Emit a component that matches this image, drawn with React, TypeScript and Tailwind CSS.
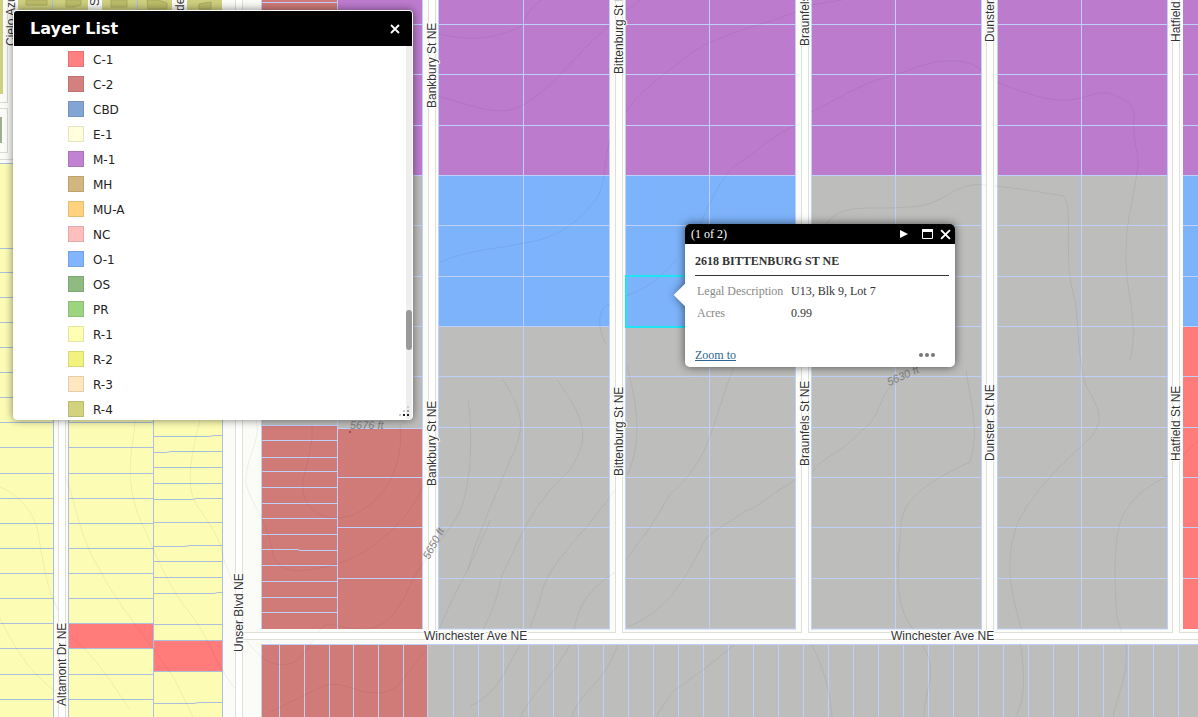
import React from 'react';

interface Layer {
  name: string;
  color: string;
}

const LAYERS: Layer[] = [
  { name: 'C-1', color: '#ff8080' },
  { name: 'C-2', color: '#d47f80' },
  { name: 'CBD', color: '#82a5d4' },
  { name: 'E-1', color: '#ffffdc' },
  { name: 'M-1', color: '#c182d4' },
  { name: 'MH', color: '#d2b57f' },
  { name: 'MU-A', color: '#ffd27f' },
  { name: 'NC', color: '#ffbebe' },
  { name: 'O-1', color: '#82b4ff' },
  { name: 'OS', color: '#8fbb82' },
  { name: 'PR', color: '#9cd480' },
  { name: 'R-1', color: '#ffffb4' },
  { name: 'R-2', color: '#f2f280' },
  { name: 'R-3', color: '#ffe6be' },
  { name: 'R-4', color: '#d3d37f' },
];

const PURPLE = '#bd7bce';
const BLUE = '#7db3fa';
const GRAY = '#bdbebc';
const RED = '#ff7c7a';
const BRICK = '#d17b79';
const YELLOW = '#fcfcb4';
const OLIVE = '#cfd07f';
const LINE = '#bfd0fa';
const LOT_LINE = '#a9bfdd';

const ROWS = [24.5, 74.5, 125.5, 175.5, 225.5, 276.5, 326.5, 376.5, 427.5, 477.5, 527.5, 578.5];

// [left, right, center line] of the blocks between the north-south streets
const BLOCKS = [
  [438, 610, 523.5],
  [625, 796, 709.5],
  [811, 982, 895.5],
  [997, 1168, 1081.5],
];

const STREETS = [
  { x: 428, label: 'Bankbury St NE', ends: [108, 486] },
  { x: 615, label: 'Bittenburg St NE', ends: [74, 476] },
  { x: 801, label: 'Braunfels St NE', ends: [46, 466] },
  { x: 986, label: 'Dunster St NE', ends: [42, 461] },
  { x: 1172, label: 'Hatfield St NE', ends: [42, 461] },
];

const YELLOW_ROWS = [248.5, 272.5, 297.5, 322.5, 347.5, 372.5, 397.5, 422.5, 447.5, 473.5, 498.5, 523.5, 548.5, 573.5, 598.5, 623.5, 648.5, 674.5, 699.5];
const UNSER_ROWS = [467.5, 483.5, 522.5, 561.5, 577.5, 624.5, 640.5, 671.5];
const BRICK_ROWS = [440.5, 457.5, 471.5, 487.5, 503.5, 518.5, 534.5, 565.5, 581.5, 597.5, 612.5];
const BRICK_COLS = [279.5, 304.5, 329.5, 353.5, 378.5, 403.5];
const SOUTH_COLS = Array.from({ length: 30 }, (_, i) => 453.5 + i * 25);

const CONTOURS = [
  'M438 34 C460 38 485 44 522 26 C526 14 534 4 542 0',
  'M438 96 C470 104 500 120 525 104 C560 82 580 48 610 25',
  'M626 112 C640 90 665 74 685 58 C710 36 755 28 796 12',
  'M640 0 C634 6 630 8 626 10',
  'M811 5 L842 0',
  'M811 112 C840 98 860 84 890 76 C915 70 925 60 955 61 C968 61 975 66 982 70',
  'M997 82 C1020 92 1050 102 1070 100 C1090 97 1100 90 1112 94 C1128 100 1134 106 1134 114 C1132 140 1138 150 1138 164 C1134 200 1126 220 1126 250 C1124 290 1140 320 1130 360',
  'M796 125 C765 140 750 158 735 165 C718 182 712 200 700 224',
  'M610 140 C602 165 608 190 590 206 C570 230 550 238 530 242 C490 250 470 250 440 262',
  'M826 224 C845 200 870 212 920 206 C950 200 955 182 985 185 C1020 188 1050 194 1064 196 C1074 210 1062 260 1075 300 C1080 340 1078 362 1086 386 C1100 410 1104 418 1092 436 C1060 466 1034 490 1018 522 C1004 560 1010 590 1022 631',
  'M1168 476 C1142 488 1124 506 1119 526 C1112 560 1116 600 1117 618 L1122 634',
  'M1126 643 C1128 680 1118 692 1113 717',
  'M1020 643 C1026 680 1024 700 1016 717',
  'M1198 440 L1183 456',
  'M895 384 C880 390 880 420 862 430 C840 455 826 454 812 472',
  'M796 480 C770 494 755 510 745 511 C725 526 712 530 705 540 C680 590 665 610 628 627',
  'M966 370 C970 400 980 430 970 462 C930 480 900 500 901 527 C896 580 896 610 915 631',
  'M812 645 C824 670 830 690 832 717',
  'M922 645 C940 670 924 690 924 717',
  'M734 645 C710 665 690 680 672 692 L656 717',
  'M676 260 C655 285 640 290 626 296 M610 304 C596 308 598 330 606 344 M627 366 C636 400 644 440 627 475',
  'M734 367 C712 420 712 460 670 494 C650 530 640 540 626 560',
  'M503 380 C525 415 525 430 510 460 C490 510 475 540 468 570',
  'M557 380 C590 425 588 440 570 470 C530 505 520 540 502 575 C495 610 485 625 478 640',
  'M615 490 C580 540 545 565 540 600 L530 628',
  'M615 572 C590 590 580 600 574 630',
  'M618 645 C600 690 580 690 572 717',
  'M570 645 C550 680 535 690 520 717',
  'M520 645 C500 680 495 695 470 706',
  'M312 425 C314 450 300 480 303 490 C308 520 335 520 350 516 C390 500 404 460 400 424',
  'M256 420 C262 440 244 460 246 484 C254 510 268 520 273 555 C280 575 300 572 330 566 C370 556 410 520 424 484',
  'M468 400 C474 440 470 500 455 520 C440 545 420 560 408 590 C390 630 370 635 330 624 C315 622 310 665 282 665 C264 664 254 650 246 640',
  'M426 650 C400 680 402 690 380 693 C350 694 340 675 315 690 L270 712',
  'M490 520 C470 570 450 600 440 628',
  'M0 487 C20 495 35 515 38 532 C44 570 48 590 58 610',
  'M66 478 C75 500 80 540 100 570 C120 610 150 640 175 680 L193 717',
  'M135 420 C134 450 120 480 145 530 C170 590 180 600 195 620 C215 650 215 665 238 692',
  'M200 420 C190 460 184 490 200 510 C215 530 222 545 224 560 L236 592',
  'M0 618 C20 660 35 675 56 692',
  'M70 636 C90 650 110 680 130 710',
];

const CityMap: React.FC = () => (
  <svg
    className="absolute inset-0 w-full h-full"
    viewBox="0 0 1198 717"
    preserveAspectRatio="xMidYMid slice"
    fontFamily='"Liberation Sans", Arial, sans-serif'
    fontSize={12}
  >
    <rect width="1198" height="717" fill="#fbfbf8" />

    {/* apartments in the north west corner */}
    <rect x="0" y="0" width="3" height="94" fill={OLIVE} />
    <rect x="18" y="0" width="70" height="14" fill={OLIVE} />
    <rect x="102" y="0" width="70" height="14" fill={OLIVE} />
    <rect x="187" y="0" width="35" height="14" fill={OLIVE} />
    <path d="M26 0h21v5h-21zM66 0h15v5l-7 2h-8zM111 0h16v7h-16zM147 0h11l9 3v6h-19zM199 4l12-2v7h-12z" fill="#bcbc68" stroke="#acac62" />
    <path d="M52.5 0v12M137.5 0v12" stroke={LOT_LINE} fill="none" />
    <path d="M0 102.5h7.5V0M0 108.5h7.5v44H0M0 159.5h14" stroke="#dadad5" fill="none" />
    <rect x="0" y="117" width="2" height="26" fill="#9fae8f" />

    {/* residential lots */}
    <rect x="0" y="163" width="53" height="554" fill={YELLOW} />
    <rect x="68" y="163" width="154" height="554" fill={YELLOW} />
    <rect x="69" y="624" width="84" height="24" fill={RED} />
    <rect x="154" y="641" width="68" height="30" fill={RED} />
    <g stroke={LOT_LINE} fill="none">
      <path d="M0 163.5h53.5V717M68.5 163V717M153.5 420V717M222.5 163V717" />
      {YELLOW_ROWS.map((y) => (
        <path key={y} d={`M0 ${y}H53M68 ${y}H153`} />
      ))}
      {UNSER_ROWS.map((y) => (
        <path key={y} d={`M154 ${y}H222`} />
      ))}
      <path d="M154 436.5h55l5-1h8M154 452.5h12l5-1h51M154 499.5h38l5-1h25M154 546.5h30l6-1h32M154 593.5h60l4-1h4M154 703.5h40l5-1h23" />
    </g>

    {/* commercial block east of Unser Blvd */}
    <rect x="262" y="0" width="75" height="175" fill={BRICK} />
    <rect x="338" y="0" width="85" height="175" fill={PURPLE} />
    <rect x="262" y="175" width="161" height="254" fill={GRAY} />
    <rect x="262" y="425" width="161" height="204" fill={BRICK} />
    <rect x="338" y="420" width="85" height="8" fill={GRAY} />
    <g stroke={LINE} fill="none">
      <path d="M262 2.5H337M261.5 0V629M337.5 0V629M422.5 0V629M262 425.5H337M338 428.5H423" />
      {ROWS.filter((y) => y < 420 || y > 430).map((y) => (
        <path key={y} d={`M338 ${y}H423`} />
      ))}
      {BRICK_ROWS.map((y) => (
        <path key={y} d={`M262 ${y}H337`} />
      ))}
      <path d="M262 549.5h36l2 1h37" />
    </g>

    {/* long blocks */}
    {BLOCKS.map(([left, right, mid], i) => (
      <g key={left}>
        <rect x={left} y="0" width={right - left} height="175" fill={PURPLE} />
        <rect x={left} y="175" width={right - left} height="454" fill={GRAY} />
        {i < 2 && <rect x={left} y="175" width={right - left} height="151" fill={BLUE} />}
        <rect x={left + 0.5} y="-2" width={right - left - 1} height="631" fill="none" stroke={LINE} />
        <path d={`M${mid} 0V629`} stroke={LINE} />
        {ROWS.map((y) => (
          <path key={y} d={`M${left} ${y}H${right}`} stroke={LINE} />
        ))}
      </g>
    ))}
    <rect x="1183" y="0" width="15" height="175" fill={PURPLE} />
    <rect x="1183" y="175" width="15" height="151" fill={BLUE} />
    <rect x="1183" y="326" width="15" height="303" fill={RED} />
    {ROWS.map((y) => (
      <path key={y} d={`M1183 ${y}H1198`} stroke={LINE} />
    ))}

    {/* lots south of Winchester */}
    <rect x="262" y="644" width="165" height="73" fill={BRICK} />
    <rect x="427" y="644" width="771" height="73" fill={GRAY} />
    <path d="M262 644.5H1198M261.5 644V717M427.5 644V717" stroke={LINE} />
    {[...BRICK_COLS, ...SOUTH_COLS].map((x) => (
      <path key={x} d={`M${x} 644V717`} stroke={LINE} />
    ))}

    <g stroke="#000" strokeOpacity={0.06} fill="none">
      {CONTOURS.map((d) => (
        <path key={d} d={d} />
      ))}
    </g>

    {/* roads */}
    <g fill="#fff" stroke="#dfe1d8">
      <rect x="58.5" y="160" width="7" height="560" />
      <rect x="235.5" y="-2" width="7" height="722" />
      <rect x="243.5" y="632.5" width="960" height="7" />
      {STREETS.map(({ x }) => (
        <path key={x} d={`M${x + 0.5} -1V632.5M${x + 7.5} -1V632.5`} />
      ))}
    </g>
    {STREETS.map(({ x }) => (
      <rect key={x} x={x + 1} y="0" width="6" height="634" fill="#fff" />
    ))}

    {/* selected parcel */}
    <rect x="626" y="276" width="84" height="51" fill="none" stroke="#1fe5f2" strokeWidth={2} />

    <g fill="#333" stroke="#fff" strokeWidth={2} strokeLinejoin="round" paintOrder="stroke">
      {STREETS.map(({ x, label, ends }) =>
        ends.map((y) => (
          <text key={`${label}-${y}`} transform={`translate(${x + 8} ${y}) rotate(-90)`}>
            {label}
          </text>
        ))
      )}
      <text transform="translate(66 706) rotate(-90)">Altamont Dr NE</text>
      <text transform="translate(243 652) rotate(-90)">Unser Blvd NE</text>
      <text transform="translate(15 46) rotate(-90)">Cielo Azul</text>
      <text transform="translate(99 6) rotate(-90)">St</text>
      <text transform="translate(184 11) rotate(-90)">de</text>
      <text x="424" y="640">Winchester Ave NE</text>
      <text x="891" y="640">Winchester Ave NE</text>
    </g>
    <g fill="#808080" fontSize={11} fontStyle="italic">
      <text x="350" y="429">5676 ft</text>
      <text transform="translate(429 560) rotate(-62)">5650 ft</text>
      <text transform="translate(889 386) rotate(-24)">5630 ft</text>
    </g>
    <circle cx="350" cy="432" r="1" fill="#8b3f3f" />
  </svg>
);

const CloseIcon: React.FC<{ className: string }> = ({ className }) => (
  <svg className={className} viewBox="0 0 10 10" fill="none" stroke="currentColor" strokeWidth={1.8}>
    <path d="M1 1l8 8M9 1l-8 8" />
  </svg>
);

const LayerList: React.FC = () => (
  <section className="absolute left-[13px] top-[10px] w-[400px] h-[410px] flex flex-col rounded border border-white bg-white shadow-[0_0_8px_rgba(0,0,0,0.5)] overflow-hidden font-['DejaVu_Sans',Verdana,sans-serif]">
    <header className="h-[35px] shrink-0 flex items-center justify-between bg-black text-white pl-4 pr-3">
      <h2 className="text-base font-bold">Layer List</h2>
      <button aria-label="Close layer list" className="block">
        <CloseIcon className="size-[10px]" />
      </button>
    </header>
    <div className="flex-1 min-h-0 flex">
      <ul className="flex-1 overflow-hidden">
        {LAYERS.map((layer) => (
          <li key={layer.name} className="h-[25px] flex items-center gap-[9px] pl-[54px] text-xs text-[#222]">
            <span className="size-4 border border-black/10" style={{ backgroundColor: layer.color }} />
            <span className="pt-0.5">{layer.name}</span>
          </li>
        ))}
      </ul>
      <div className="w-[6px] bg-[#eeeeee] pt-[264px]">
        <div className="h-10 rounded-full bg-[#999999]" />
      </div>
    </div>
    <svg className="absolute right-0.5 bottom-0.5 size-3" viewBox="0 0 12 12">
      <path d="M9 1h2v2H9zM5 5h2v2H5zM1 9h2v2H1z" fill="#ccc" />
      <path d="M9 5h2v2H9z" fill="#999" />
      <path d="M5 9h2v2H5zM9 9h2v2H9z" fill="#222" />
    </svg>
  </section>
);

const ParcelPopup: React.FC = () => (
  <section className="absolute left-[685px] top-[224px] w-[270px] rounded-[5px] shadow-[0_0_10px_rgba(0,0,0,0.6)] font-['Liberation_Serif','Times_New_Roman',serif] text-xs">
    <div className="absolute -left-2 top-[63px] size-4 rotate-45 bg-white shadow-[0_0_8px_rgba(0,0,0,0.4)]" />
    <div className="relative rounded-[5px] bg-white overflow-hidden">
      <header className="h-5 flex items-center bg-black text-white pl-[6px] pr-1">
        <span className="flex-1">(1 of 2)</span>
        <button aria-label="Next feature" className="mr-[14px]">
          <svg className="size-2" viewBox="0 0 8 8" fill="currentColor">
            <path d="M0 0l8 4-8 4z" />
          </svg>
        </button>
        <button aria-label="Maximize" className="mr-[7px]">
          <svg className="w-[11px] h-[10px]" viewBox="0 0 11 10" fill="none" stroke="currentColor">
            <path d="M.5.5h10v9H.5z" />
            <path d="M0 1.5h11" strokeWidth={3} />
          </svg>
        </button>
        <button aria-label="Close">
          <CloseIcon className="size-[11px]" />
        </button>
      </header>
      <div className="pl-[10px] pr-[6px]">
        <h3 className="h-8 flex items-center border-b border-[#333] font-bold text-[#333] pt-0.5">2618 BITTENBURG ST NE</h3>
        <table className="mt-1 text-left">
          <tbody>
            <tr className="h-[22px]">
              <th className="w-24 pl-0.5 font-normal text-[#888]">Legal Description</th>
              <td className="text-[#333]">U13, Blk 9, Lot 7</td>
            </tr>
            <tr className="h-[22px]">
              <th className="w-24 pl-0.5 font-normal text-[#888]">Acres</th>
              <td className="text-[#333]">0.99</td>
            </tr>
          </tbody>
        </table>
        <div className="mt-[19px] h-6 flex items-center justify-between pr-[14px]">
          <a href="#zoom" className="underline text-[#2d6491]">Zoom to</a>
          <button aria-label="More actions">
            <svg className="w-4 h-1" viewBox="0 0 16 4" fill="#777">
              <circle cx="2" cy="2" r="2" />
              <circle cx="8" cy="2" r="2" />
              <circle cx="14" cy="2" r="2" />
            </svg>
          </button>
        </div>
      </div>
    </div>
  </section>
);

const App: React.FC = () => {
  return (
    <main className="relative h-screen w-full overflow-hidden">
      <CityMap />
      <ParcelPopup />
      <LayerList />
    </main>
  );
};

export default App;
